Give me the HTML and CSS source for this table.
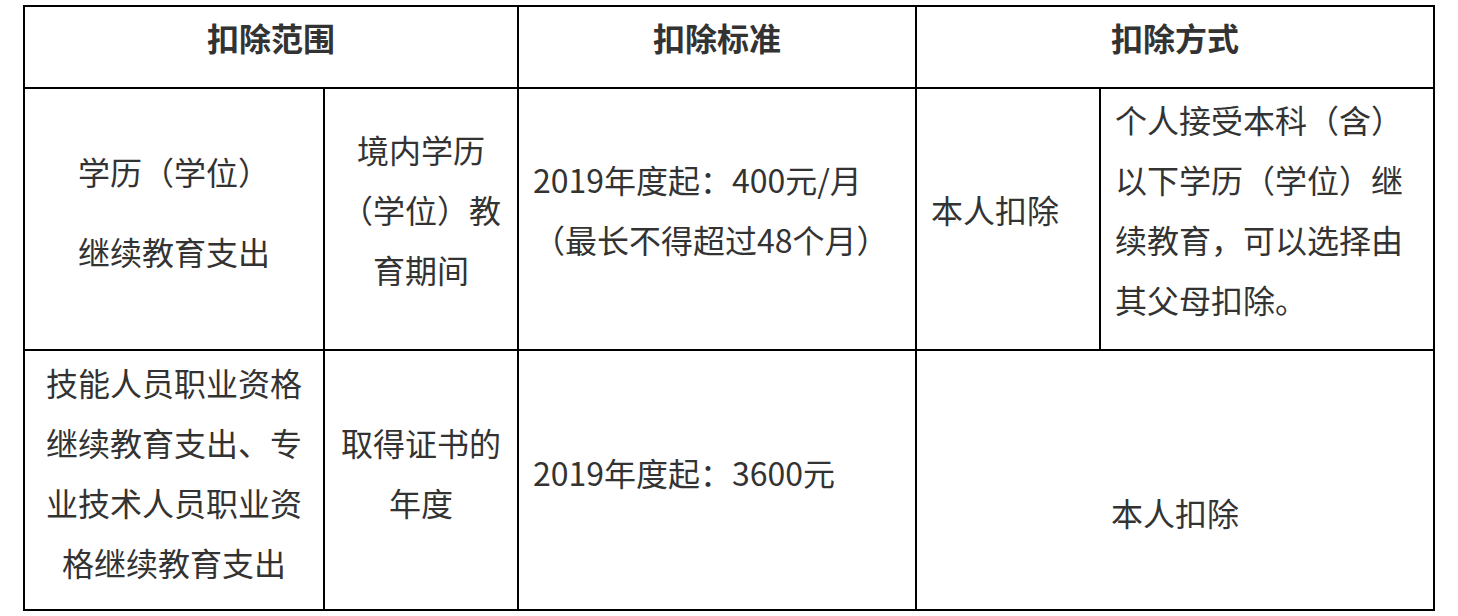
FILE: index.html
```html
<!DOCTYPE html>
<html lang="zh-CN">
<head>
<meta charset="utf-8">
<title>扣除表</title>
<link rel="stylesheet" href="styles.css">
</head>
<body>
<div class="table">
  <div class="cell head h-range">扣除范围</div>
  <div class="cell head h-std">扣除标准</div>
  <div class="cell head h-way">扣除方式</div>

  <div class="cell body center c1">
    <p>学历（学位）</p>
    <p>继续教育支出</p>
  </div>
  <div class="cell body row2 center">境内学历<br>（学位）教<br>育期间</div>
  <div class="cell body row2 left">2019年度起：400元/月<br>（最长不得超过48个月）</div>
  <div class="cell body row2 left">本人扣除</div>
  <div class="cell body row2 left">个人接受本科（含）<br>以下学历（学位）继<br>续教育，可以选择由<br>其父母扣除。</div>

  <div class="cell body center">技能人员职业资格<br>继续教育支出、专<br>业技术人员职业资<br>格继续教育支出</div>
  <div class="cell body center">取得证书的<br>年度</div>
  <div class="cell body left">2019年度起：3600元</div>
  <div class="cell body center span45 low">本人扣除</div>
</div>
</body>
</html>
```

FILE: styles.css
```css
html, body {
  margin: 0;
  padding: 0;
  background: #ffffff;
}

body {
  padding: 5px 0 0 23px;
  font-family: "Microsoft YaHei", "Noto Sans CJK SC", "Noto Sans", sans-serif;
  color: #333333;
  font-size: 32px;
}

.table {
  display: grid;
  grid-template-columns: 298px 192px 396px 182px 332px;
  grid-template-rows: 80px 260px 258px;
  gap: 2px;
  width: 1408px;
  border: 2px solid #000000;
  background: #000000;
}

.cell {
  background: #ffffff;
  display: flex;
  flex-direction: column;
  justify-content: center;
  line-height: 60px;
  box-sizing: border-box;
}

.head {
  align-items: center;
  font-weight: bold;
  padding-bottom: 20px;
}

.h-range { grid-column: 1 / 3; }
.h-way { grid-column: 4 / 6; }

.body {
  padding-bottom: 16px;
}

.row2 {
  padding-bottom: 20px;
}

.center {
  align-items: center;
  text-align: center;
}

.left {
  align-items: flex-start;
  text-align: left;
  padding-left: 14px;
}

.c1 {
  gap: 20px;
}

.c1 p {
  margin: 0;
}

.span45 {
  grid-column: 4 / 6;
}

.low {
  padding-top: 63px;
  padding-bottom: 0;
}
```
